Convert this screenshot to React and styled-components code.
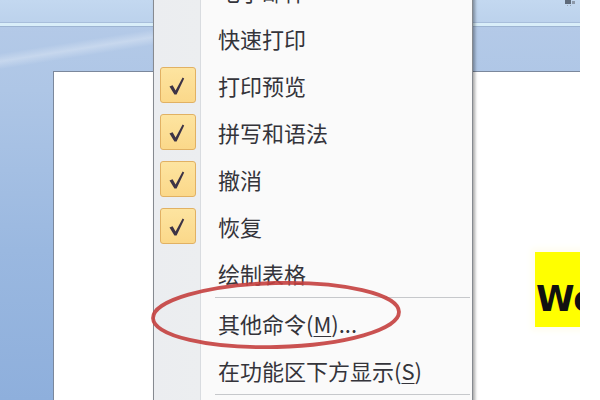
import React from "react";
import styled, { createGlobalStyle } from "styled-components";

const GlobalStyle = createGlobalStyle`
  html, body { margin: 0; padding: 0; background: #ffffff; }
  #root { width: 600px; height: 400px; }
`;

const Screen = styled.div`
  position: relative;
  width: 600px;
  height: 400px;
  overflow: hidden;
  display: flex;
  background: #ffffff;
  font-family: "Noto Sans CJK SC", "Noto Sans", sans-serif;
`;

const Window = styled.div`
  width: 580px;
  height: 400px;
  display: flex;
  flex-direction: column;
  overflow: hidden;
  background: linear-gradient(to bottom, #b6cbe8 0px, #aec6e6 90px, #9ab8e0 250px, #8eafdc 400px);
`;

const TitleBand = styled.div`
  height: 22px;
  flex: none;
  display: flex;
  justify-content: flex-end;
  align-items: flex-start;
  padding-right: 3px;
  background: linear-gradient(to bottom, #c3d8f0, #bcd2ec);
`;

const BandLine = styled.div`
  height: 3px;
  flex: none;
  background: #d9eef9;
  border-top: 1px solid #a8bedb;
  border-bottom: 1px solid #9db4d2;
`;

const Body = styled.div`
  flex: 1;
  display: flex;
  padding: 44px 0 0 53px;
  background-image: linear-gradient(
    171deg,
    transparent 0px,
    transparent 26px,
    rgba(255, 255, 255, 0.28) 34px,
    transparent 42px
  );
`;

const Page = styled.div`
  flex: 1;
  background: #ffffff;
  border-top: 1px solid #7b889c;
  border-left: 1px solid #7b889c;
  padding: 180px 0 0 481px;
  overflow: hidden;
`;

const Highlight = styled.span`
  display: inline-block;
  white-space: nowrap;
  height: 75px;
  box-sizing: border-box;
  padding: 30px 0 0 1px;
  background: #ffff00;
  box-shadow: 0 0 6px 4px #fffdf0;
  font-family: "DejaVu Sans", "Liberation Sans", sans-serif;
  font-weight: 700;
  font-size: 35px;
  line-height: 35px;
  color: #111111;
`;

const Menu = styled.div`
  position: absolute;
  left: 153px;
  top: -34px;
  width: 320px;
  box-sizing: border-box;
  border: 1px solid #868a90;
  box-shadow: 2px 2px 3px rgba(0, 0, 0, 0.35);
  background: linear-gradient(
    to right,
    #ebedf0 0px,
    #eceef0 46px,
    #d9dce0 46px,
    #d9dce0 47px,
    #fafafa 47px
  );
`;

const Item = styled.div`
  display: grid;
  grid-template-columns: 47px 1fr;
  align-items: center;
  height: 47px;
`;

const IconCell = styled.div`
  display: flex;
  justify-content: center;
  padding-left: 1px;
`;

const CheckBox = styled.div`
  width: 36px;
  height: 36px;
  box-sizing: border-box;
  border: 1px solid #e1b163;
  border-radius: 3px;
  background: linear-gradient(to bottom, #fde4a0, #fbd88a);
  display: flex;
`;

const Label = styled.span`
  padding-left: 17px;
  font-size: 22px;
  line-height: 26px;
  color: #34343a;
  white-space: nowrap;
  u {
    text-decoration: underline;
    text-underline-offset: 3px;
    text-decoration-thickness: 1px;
  }
`;

const Separator = styled.div`
  height: 3px;
  display: flex;
  align-items: center;
  padding: 0 2px 0 61px;
  &::after {
    content: "";
    flex: 1;
    height: 1px;
    background: #c6c8cb;
  }
`;

const Ellipse = styled.svg`
  position: absolute;
  left: 148px;
  top: 278px;
  width: 256px;
  height: 74px;
  overflow: visible;
  pointer-events: none;
`;

const Check = () => (
  <svg width="34" height="34" viewBox="1 1 34 34">
    <path
      d="M9.5 19.5 L12.6 18.2 L15.6 23.6 L22.6 10.6 L24.2 11.6 L16.6 27.6 L14.4 27.6 Z"
      fill="#3d3346"
    />
  </svg>
);

const Launcher = () => (
  <svg width="14" height="6" viewBox="0 0 14 6">
    <rect x="2" y="0" width="6" height="4" fill="#5e6a7a" />
    <rect x="9" y="1" width="3" height="3" fill="#8d99aa" />
    <rect x="4" y="5" width="1" height="1" fill="#9aa6b6" />
    <rect x="7" y="5" width="1" height="1" fill="#9aa6b6" />
  </svg>
);

const items = [
  { type: "item", label: "电子邮件" },
  { type: "item", label: "快速打印" },
  { type: "item", label: "打印预览", checked: true },
  { type: "item", label: "拼写和语法", checked: true },
  { type: "item", label: "撤消", checked: true },
  { type: "item", label: "恢复", checked: true },
  { type: "item", label: "绘制表格" },
  { type: "sep" },
  { type: "item", label: "其他命令(", key: "M", tail: ")..." },
  { type: "item", label: "在功能区下方显示(", key: "S", tail: ")" },
  { type: "sep" },
  { type: "item", label: "最小化功能区(", key: "N", tail: ")" },
];

export default function App() {
  return (
    <>
      <GlobalStyle />
      <Screen>
        <Window>
          <TitleBand>
            <Launcher />
          </TitleBand>
          <BandLine />
          <Body>
            <Page>
              <Highlight>Word</Highlight>
            </Page>
          </Body>
        </Window>
        <Menu>
          {items.map((it, i) =>
            it.type === "sep" ? (
              <Separator key={i} />
            ) : (
              <Item key={i}>
                <IconCell>
                  {it.checked && (
                    <CheckBox>
                      <Check />
                    </CheckBox>
                  )}
                </IconCell>
                <Label>
                  {it.label}
                  {it.key && <u>{it.key}</u>}
                  {it.tail}
                </Label>
              </Item>
            )
          )}
        </Menu>
        <Ellipse viewBox="148 278 256 74">
          <ellipse
            cx="276"
            cy="315"
            rx="123"
            ry="32"
            fill="none"
            stroke="#c43f3e"
            strokeWidth="3.8"
            opacity="0.9"
            transform="rotate(-1.5 276 315)"
          />
        </Ellipse>
      </Screen>
    </>
  );
}
